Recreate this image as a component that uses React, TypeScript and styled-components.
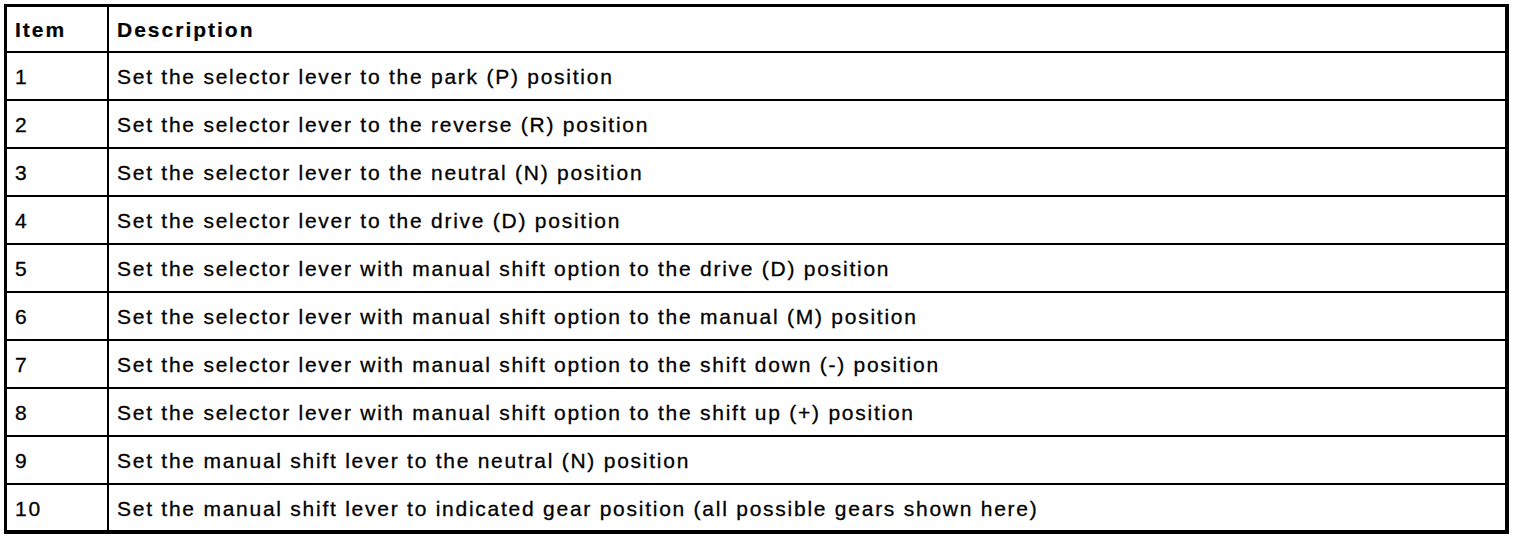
import React from "react";
import styled, { createGlobalStyle } from "styled-components";

const Global = createGlobalStyle`
  html, body { margin: 0; padding: 0; background: #fff; }
  body { font-family: "Liberation Sans", Arial, sans-serif; color: #000; }
`;

const Page = styled.div`
  padding: 4px 0 0 4px;
`;

const Table = styled.table`
  width: 1505px;
  border-collapse: separate;
  border-spacing: 0;
  border-style: solid;
  border-color: #000;
  border-width: 3px 4px 4px 3px;
  table-layout: fixed;
`;

const Cell = styled.td<{ $first?: boolean; $last?: boolean; $head?: boolean }>`
  box-sizing: border-box;
  height: ${(p) => (p.$head ? 46 : p.$last ? 45 : 48)}px;
  padding: 1px 0 0 8px;
  border-right: ${(p) => (p.$first ? "2px solid #000" : "none")};
  border-bottom: ${(p) => (p.$last ? "none" : "2px solid #000")};
  font-size: 21px;
  letter-spacing: ${(p) => (p.$head ? 2 : 1.75)}px;
  font-weight: ${(p) => (p.$head ? 700 : 400)};
  -webkit-text-stroke: ${(p) => (p.$head ? 0.2 : 0.3)}px #000;
  text-align: left;
  vertical-align: middle;
  white-space: nowrap;
  line-height: 1;
`;

const rows = [
  "Set the selector lever to the park (P) position",
  "Set the selector lever to the reverse (R) position",
  "Set the selector lever to the neutral (N) position",
  "Set the selector lever to the drive (D) position",
  "Set the selector lever with manual shift option to the drive (D) position",
  "Set the selector lever with manual shift option to the manual (M) position",
  "Set the selector lever with manual shift option to the shift down (-) position",
  "Set the selector lever with manual shift option to the shift up (+) position",
  "Set the manual shift lever to the neutral (N) position",
  "Set the manual shift lever to indicated gear position (all possible gears shown here)",
];

export default function App() {
  return (
    <Page>
      <Global />
      <Table>
        <colgroup>
          <col style={{ width: 102 }} />
          <col />
        </colgroup>
        <thead>
          <tr>
            <Cell as="th" $head $first>Item</Cell>
            <Cell as="th" $head>Description</Cell>
          </tr>
        </thead>
        <tbody>
          {rows.map((r, i) => (
            <tr key={i}>
              <Cell $first $last={i === rows.length - 1}>{i + 1}</Cell>
              <Cell $last={i === rows.length - 1}>{r}</Cell>
            </tr>
          ))}
        </tbody>
      </Table>
    </Page>
  );
}
